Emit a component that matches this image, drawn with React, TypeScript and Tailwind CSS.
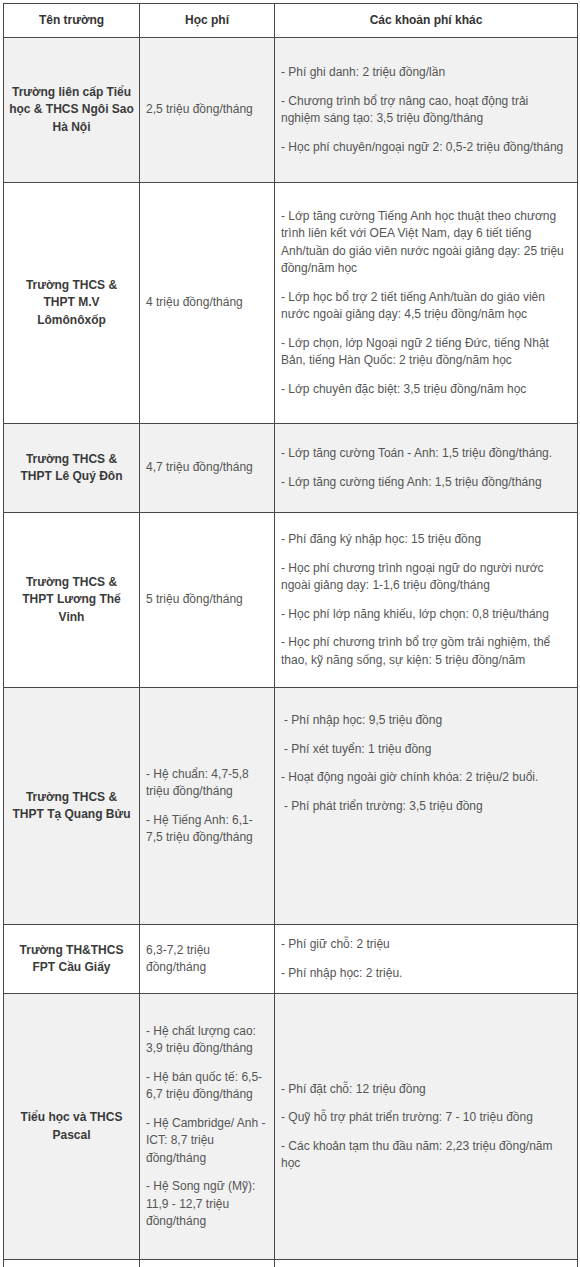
import React from 'react';

interface FeeRow {
  name: React.ReactNode;
  tuition: React.ReactNode;
  others: React.ReactNode;
  height: string;
  shaded: boolean;
  othersClass?: string;
}

const P: React.FC<{ children: React.ReactNode; className?: string }> = ({ children, className }) => (
  <p className={`my-[11px] ${className ?? ''}`}>{children}</p>
);

const rows: FeeRow[] = [
  {
    name: <>Trường liên cấp Tiểu<br />học &amp; THCS Ngôi Sao<br />Hà Nội</>,
    tuition: '2,5 triệu đồng/tháng',
    others: (
      <>
        <P>- Phí ghi danh: 2 triệu đồng/lần</P>
        <P>- Chương trình bổ trợ nâng cao, hoạt động trải<br />nghiệm sáng tạo: 3,5 triệu đồng/tháng</P>
        <P>- Học phí chuyên/ngoại ngữ 2: 0,5-2 triệu đồng/tháng</P>
      </>
    ),
    height: 'h-[145px]',
    shaded: true,
  },
  {
    name: <>Trường THCS &amp;<br />THPT M.V<br />Lômônôxốp</>,
    tuition: '4 triệu đồng/tháng',
    others: (
      <>
        <P>
          - Lớp tăng cường Tiếng Anh học thuật theo chương<br />trình liên kết với OEA Việt Nam, dạy 6 tiết tiếng<br />
          Anh/tuần do giáo viên nước ngoài giảng dạy: 25 triệu<br />đồng/năm học
        </P>
        <P>- Lớp học bổ trợ 2 tiết tiếng Anh/tuần do giáo viên<br />nước ngoài giảng dạy: 4,5 triệu đồng/năm học</P>
        <P>- Lớp chọn, lớp Ngoại ngữ 2 tiếng Đức, tiếng Nhật<br />Bản, tiếng Hàn Quốc: 2 triệu đồng/năm học</P>
        <P>- Lớp chuyên đặc biệt: 3,5 triệu đồng/năm học</P>
      </>
    ),
    height: 'h-[241px]',
    shaded: false,
  },
  {
    name: <>Trường THCS &amp;<br />THPT Lê Quý Đôn</>,
    tuition: '4,7 triệu đồng/tháng',
    others: (
      <>
        <P>- Lớp tăng cường Toán - Anh: 1,5 triệu đồng/tháng.</P>
        <P>- Lớp tăng cường tiếng Anh: 1,5 triệu đồng/tháng</P>
      </>
    ),
    height: 'h-[89px]',
    shaded: true,
  },
  {
    name: <>Trường THCS &amp;<br />THPT Lương Thế<br />Vinh</>,
    tuition: '5 triệu đồng/tháng',
    others: (
      <>
        <P>- Phí đăng ký nhập học: 15 triệu đồng</P>
        <P>- Học phí chương trình ngoại ngữ do người nước<br />ngoài giảng dạy: 1-1,6 triệu đồng/tháng</P>
        <P>- Học phí lớp năng khiếu, lớp chọn: 0,8 triệu/tháng</P>
        <P>- Học phí chương trình bổ trợ gồm trải nghiệm, thể<br />thao, kỹ năng sống, sự kiện: 5 triệu đồng/năm</P>
      </>
    ),
    height: 'h-[175px]',
    shaded: false,
  },
  {
    name: <>Trường THCS &amp;<br />THPT Tạ Quang Bửu</>,
    tuition: (
      <>
        <P>- Hệ chuẩn: 4,7-5,8<br />triệu đồng/tháng</P>
        <P>- Hệ Tiếng Anh: 6,1-<br />7,5 triệu đồng/tháng</P>
      </>
    ),
    others: (
      <>
        <P className="pl-[3px]">- Phí nhập học: 9,5 triệu đồng</P>
        <P className="pl-[3px]">- Phí xét tuyển: 1 triệu đồng</P>
        <P>- Hoạt động ngoài giờ chính khóa: 2 triệu/2 buổi.</P>
        <P className="pl-[3px]">- Phí phát triển trường: 3,5 triệu đồng</P>
      </>
    ),
    height: 'h-[237px]',
    shaded: true,
    othersClass: 'align-top pt-[13px]',
  },
  {
    name: <>Trường TH&amp;THCS<br />FPT Cầu Giấy</>,
    tuition: <>6,3-7,2 triệu<br />đồng/tháng</>,
    others: (
      <>
        <P>- Phí giữ chỗ: 2 triệu</P>
        <P>- Phí nhập học: 2 triệu.</P>
      </>
    ),
    height: 'h-[68px]',
    shaded: false,
  },
  {
    name: <>Tiểu học và THCS<br />Pascal</>,
    tuition: (
      <>
        <P>- Hệ chất lượng cao:<br />3,9 triệu đồng/tháng</P>
        <P>- Hệ bán quốc tế: 6,5-<br />6,7 triệu đồng/tháng</P>
        <P>- Hệ Cambridge/ Anh -<br />ICT: 8,7 triệu<br />đồng/tháng</P>
        <P>- Hệ Song ngữ (Mỹ):<br />11,9 - 12,7 triệu<br />đồng/tháng</P>
      </>
    ),
    others: (
      <>
        <P>- Phí đặt chỗ: 12 triệu đồng</P>
        <P>- Quỹ hỗ trợ phát triển trường: 7 - 10 triệu đồng</P>
        <P>- Các khoản tạm thu đầu năm: 2,23 triệu đồng/năm<br />học</P>
      </>
    ),
    height: 'h-[266px]',
    shaded: true,
  },
];

const App: React.FC = () => {
  return (
    <div className="h-[1267px] w-[580px] overflow-hidden bg-white pl-[3px] pt-[3px] font-['Liberation_Sans',Arial,sans-serif] text-[12px] leading-[17.5px] text-[#555]">
      <table className="w-[574px] table-fixed border-collapse">
        <colgroup>
          <col className="w-[136px]" />
          <col className="w-[135px]" />
          <col className="w-[303px]" />
        </colgroup>
        <thead>
          <tr className="h-[34px] bg-white">
            <th className="border border-[#484848] text-center font-bold text-[#333]">Tên trường</th>
            <th className="border border-[#484848] text-center font-bold text-[#333]">Học phí</th>
            <th className="border border-[#484848] text-center font-bold text-[#333]">Các khoản phí khác</th>
          </tr>
        </thead>
        <tbody>
          {rows.map((row, i) => (
            <tr key={i} className={`${row.height} ${row.shaded ? 'bg-[#f1f1f1]' : 'bg-white'}`}>
              <td className="border border-[#484848] px-[4px] text-center align-middle font-bold text-[#3a3a3a]">
                {row.name}
              </td>
              <td className="border border-[#484848] px-[6px] align-middle">{row.tuition}</td>
              <td className={`border border-[#484848] px-[6px] ${row.othersClass ?? 'align-middle'}`}>
                {row.others}
              </td>
            </tr>
          ))}
          <tr className="h-[40px] bg-white">
            <td className="border border-[#484848]" />
            <td className="border border-[#484848]" />
            <td className="border border-[#484848]" />
          </tr>
        </tbody>
      </table>
    </div>
  );
};

export default App;
